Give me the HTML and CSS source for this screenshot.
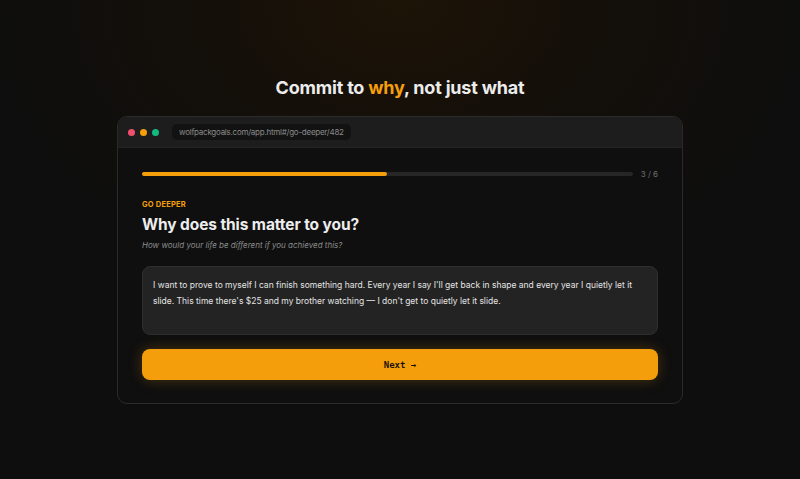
FILE: index.html
```html
<!DOCTYPE html>
<html>
  <head>
    <meta charset="UTF-8">
    <title>Commit to why</title>
    <link rel="stylesheet" href="styles.css">
  </head>
  <body>
  <div class="stage">
    <h1 class="headline">Commit to <span class="accent">why</span>, not just what</h1>

    <div class="window">
      <div class="titlebar">
        <span class="dot red"></span><span class="dot amber"></span><span class="dot green"></span>
        <div class="url">wolfpackgoals.com/app.html#/go-deeper/482</div>
      </div>

      <div class="screen">
        <div class="progress">
          <div class="track"><div class="fill" style="width: 50%"></div></div>
          <span class="step">3 / 6</span>
        </div>

        <div class="eyebrow">GO DEEPER</div>
        <h2 class="question">Why does this matter to you?</h2>
        <p class="hint">How would your life be different if you achieved this?</p>

        <div class="answer">I want to prove to myself I can finish something hard. Every year I say I'll get back in shape and every year I quietly let it slide. This time there's $25 and my brother watching — I don't get to quietly let it slide.</div>

        <button class="next">Next →</button>
      </div>
    </div>
  </div>
  </body>
</html>
```

FILE: styles.css
```css
html, body { margin: 0; height: 100%; }
body {
  background: #0e0e0e radial-gradient(ellipse 420px 300px at 50% 0, #1d1407 0%, #140f09 45%, #0e0e0e 100%);
  font-family: "Inter", "DejaVu Sans", sans-serif;
  color: #ececec;
}
.stage { display: flex; flex-direction: column; align-items: center; padding-top: 76px; }
.headline { margin: 0 0 16px; font-size: 18px; font-weight: 700; letter-spacing: -0.2px; color: #ececec; line-height: 24px; }
.accent { color: #f59e0b; }

.window {
  width: 564px;
  border: 1px solid #2b2b2b;
  border-radius: 10px;
  background: #0f0f0f;
  overflow: hidden;
}
.titlebar {
  display: flex; align-items: center;
  height: 30px; padding: 0 10px;
  background: #1d1d1d;
  border-bottom: 1px solid #242424;
}
.dot { width: 7px; height: 7px; border-radius: 50%; margin-right: 5px; }
.red { background: #f0506e; }
.amber { background: #f5a00b; }
.green { background: #12b981; }
.url {
  margin-left: 8px;
  padding: 0 7px;
  height: 16px; line-height: 16px;
  background: #121212;
  border-radius: 5px;
  font-size: 8px; letter-spacing: -0.25px; color: #8a8a8a;
}

.screen { padding: 21px 24px 23px; }
.progress { display: flex; align-items: center; gap: 8px; }
.track { flex: 1; height: 4px; background: #262626; border-radius: 2px; }
.fill { height: 100%; background: #f59e0b; border-radius: 2px; }
.step { font-size: 8px; color: #6e6e6e; }

.eyebrow { margin-top: 21px; font-size: 7.5px; font-weight: 700; color: #f59e0b; letter-spacing: 0.2px; }
.question { margin: 6px 0 0; font-size: 15.5px; font-weight: 700; color: #ededed; letter-spacing: -0.1px; }
.hint { margin: 6px 0 0; font-size: 8px; font-style: italic; color: #8c8c8c; }

.answer {
  margin-top: 16px;
  height: 49px;
  padding: 10px 10px 8px;
  background: #232323;
  border: 1px solid #2e2e2e;
  border-radius: 8px;
  font-size: 8.5px; line-height: 16px; color: #e4e4e4;
}
.next {
  display: block; width: 100%;
  margin-top: 14px;
  height: 31px;
  border: 0; border-radius: 8px;
  background: #f59e0b;
  box-shadow: 0 0 14px rgba(245, 158, 11, 0.25);
  font-family: "DejaVu Sans Mono", monospace;
  font-size: 9px; font-weight: 700; color: #1a1206;
}
```
